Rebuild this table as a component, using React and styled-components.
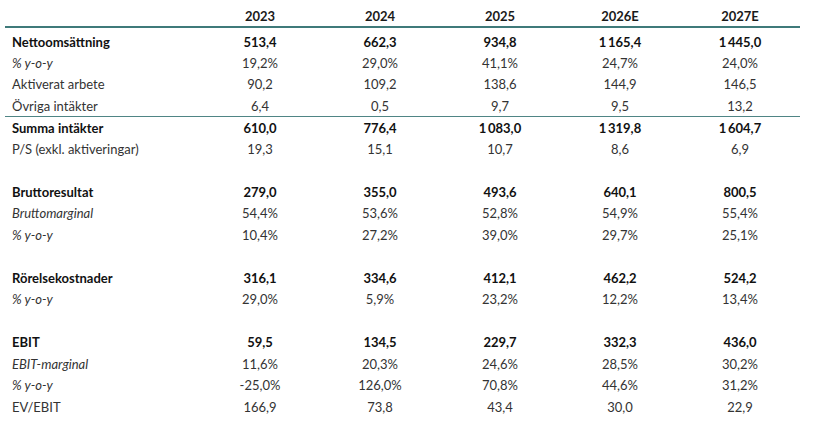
import React from "react";
import styled, { createGlobalStyle } from "styled-components";

const GlobalStyle = createGlobalStyle`
  html, body {
    margin: 0;
    padding: 0;
    background: #ffffff;
  }
  body {
    font-family: Lato, "Open Sans", "Liberation Sans", sans-serif;
    color: #222;
  }
`;

const Page = styled.div`
  width: 820px;
  height: 426px;
  padding: 5px 20px 0 5px;
  box-sizing: border-box;
`;

const Table = styled.table`
  width: 795px;
  border-collapse: collapse;
  table-layout: fixed;
  font-size: 13px;

  tbody tr:first-child td {
    height: 21px;
    padding-top: 3px;
  }
`;

const HeadCell = styled.th`
  height: 21px;
  padding: 0;
  font-weight: 700;
  color: #1a1a1a;
  text-align: center;
  border-bottom: 2px solid #3f7a7a;
  width: ${({ $w }) => $w || "auto"};
`;

const Row = styled.tr`
  height: 21.5px;
  border-top: ${({ $ruled }) => ($ruled ? "1px solid #4f8585" : "none")};
`;

const Label = styled.td`
  padding: 0 0 0 7px;
  white-space: nowrap;
  font-weight: ${({ $bold }) => ($bold ? 700 : 400)};
  font-style: ${({ $italic }) => ($italic ? "italic" : "normal")};
  color: ${({ $bold }) => ($bold ? "#111" : "#333")};
`;

const Value = styled.td`
  padding: 0;
  text-align: center;
  font-weight: ${({ $bold }) => ($bold ? 700 : 400)};
  color: ${({ $bold }) => ($bold ? "#111" : "#333")};
`;

const years = ["2023", "2024", "2025", "2026E", "2027E"];
const t = "\u2009";

const rows = [
  { label: "Nettoomsättning", bold: true, v: ["513,4", "662,3", "934,8", `1${t}165,4`, `1${t}445,0`] },
  { label: "% y-o-y", italic: true, v: ["19,2%", "29,0%", "41,1%", "24,7%", "24,0%"] },
  { label: "Aktiverat arbete", v: ["90,2", "109,2", "138,6", "144,9", "146,5"] },
  { label: "Övriga intäkter", v: ["6,4", "0,5", "9,7", "9,5", "13,2"] },
  { label: "Summa intäkter", bold: true, ruled: true, v: ["610,0", "776,4", `1${t}083,0`, `1${t}319,8`, `1${t}604,7`] },
  { label: "P/S (exkl. aktiveringar)", v: ["19,3", "15,1", "10,7", "8,6", "6,9"] },
  { spacer: true },
  { label: "Bruttoresultat", bold: true, v: ["279,0", "355,0", "493,6", "640,1", "800,5"] },
  { label: "Bruttomarginal", italic: true, v: ["54,4%", "53,6%", "52,8%", "54,9%", "55,4%"] },
  { label: "% y-o-y", italic: true, v: ["10,4%", "27,2%", "39,0%", "29,7%", "25,1%"] },
  { spacer: true },
  { label: "Rörelsekostnader", bold: true, v: ["316,1", "334,6", "412,1", "462,2", "524,2"] },
  { label: "% y-o-y", italic: true, v: ["29,0%", "5,9%", "23,2%", "12,2%", "13,4%"] },
  { spacer: true },
  { label: "EBIT", bold: true, v: ["59,5", "134,5", "229,7", "332,3", "436,0"] },
  { label: "EBIT-marginal", italic: true, v: ["11,6%", "20,3%", "24,6%", "28,5%", "30,2%"] },
  { label: "% y-o-y", italic: true, v: ["-25,0%", "126,0%", "70,8%", "44,6%", "31,2%"] },
  { label: "EV/EBIT", v: ["166,9", "73,8", "43,4", "30,0", "22,9"] },
];

export default function App() {
  return (
    <Page>
      <GlobalStyle />
      <Table>
        <thead>
          <tr>
            <HeadCell $w="195px" />
            {years.map((y) => (
              <HeadCell key={y} $w="120px">{y}</HeadCell>
            ))}
          </tr>
        </thead>
        <tbody>
          {rows.map((r, i) =>
            r.spacer ? (
              <Row key={i}>
                <Label colSpan={6} />
              </Row>
            ) : (
              <Row key={i} $ruled={r.ruled}>
                <Label $bold={r.bold} $italic={r.italic}>{r.label}</Label>
                {r.v.map((val, j) => (
                  <Value key={j} $bold={r.bold}>{val}</Value>
                ))}
              </Row>
            )
          )}
        </tbody>
      </Table>
    </Page>
  );
}
